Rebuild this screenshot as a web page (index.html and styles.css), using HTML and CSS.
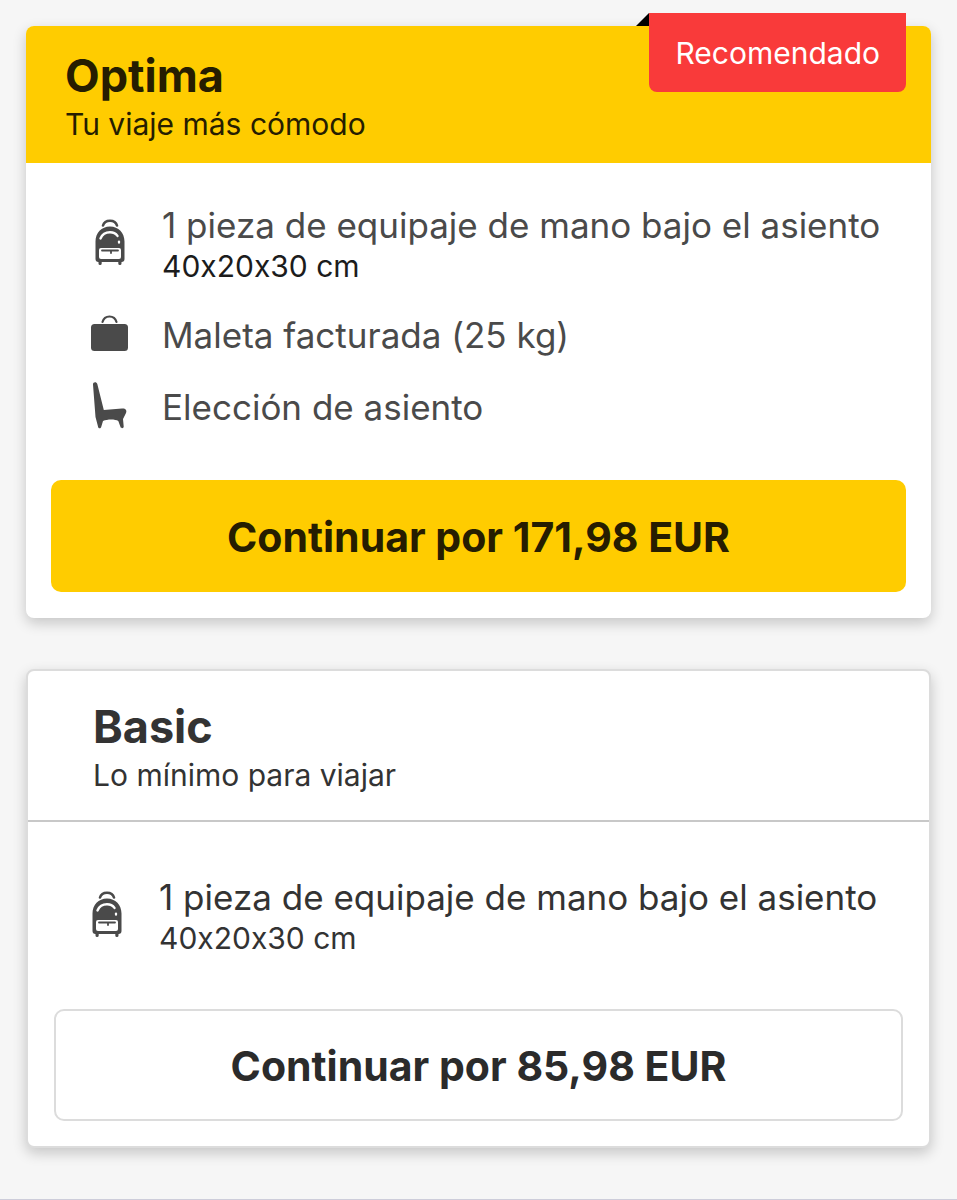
FILE: index.html
```html
<!DOCTYPE html>
<html lang="es">
  <head>
    <meta charset="UTF-8" />
    <meta name="viewport" content="width=device-width, initial-scale=1.0" />
    <title>Elige tu tarifa</title>
    <link rel="stylesheet" href="styles.css">
  </head>
  <body>
    <!-- Shared icons -->
    <svg class="icon-defs" width="0" height="0" aria-hidden="true">
      <symbol id="icon-backpack" viewBox="0 0 40 48">
        <path d="M13 7.500a7.200 6.200 0 0 1 14 0" fill="none" stroke="currentColor" stroke-width="2.600" stroke-linecap="round" />
        <path d="M20 8.500c8.500 0 14.500 6.500 14.500 15V41a3 3 0 0 1-3 3v1.500a1.500 1.500 0 0 1-3.200 0V44H11.700v1.500a1.500 1.500 0 0 1-3.200 0V44a3 3 0 0 1-3-3V23.500c0-8.500 6-15 14.500-15z" fill="currentColor" />
        <path d="M10.500 20.500c1.800-4.200 5-6.200 9.500-6.200 3.400 0 5.800 1.200 7.500 3.600" fill="none" stroke="#fff" stroke-width="2.400" stroke-linecap="round" />
        <path d="M29 23.500v1.200" stroke="#fff" stroke-width="2.200" stroke-linecap="round" />
        <rect x="9" y="30" width="22" height="11" rx="2" fill="#fff" />
        <path d="M12 32.500h16M21 32.500v2.500" stroke="currentColor" stroke-width="1.800" stroke-linecap="round" />
      </symbol>
      <symbol id="icon-suitcase" viewBox="0 0 40 48">
        <path d="M12.500 13c1-3.500 4-5.500 7-5.500s6 2 7 5.500" fill="none" stroke="currentColor" stroke-width="2.200" stroke-linecap="round" />
        <rect x="1" y="15" width="37" height="27" rx="3.500" fill="currentColor" />
      </symbol>
      <symbol id="icon-seat" viewBox="0 0 40 48">
        <path d="M3 3.500C2.800 1 6.500.500 7.300 3l6.500 26 18.200-1.500c3.500-.3 5.200 1.800 4 4.500l-3 6 .7 7.500c.1 2-2.700 2.300-3.200.5l-2.200-6c-3-2-11-2-15.300 0l-1.800 6c-.5 2-3.200 1.700-3.200-.5L5.500 36 3 3.500z" fill="currentColor" />
      </symbol>
    </svg>

    <main class="fares">
      <section class="card card-optima">
        <span class="badge">Recomendado</span>
        <header class="card-header">
          <h2>Optima</h2>
          <p>Tu viaje más cómodo</p>
        </header>
        <div class="card-body">
          <ul class="features">
            <li>
              <svg class="icon" aria-hidden="true"><use href="#icon-backpack" /></svg>
              <div>1 pieza de equipaje de mano bajo el asiento <small>40x20x30 cm</small></div>
            </li>
            <li>
              <svg class="icon" aria-hidden="true"><use href="#icon-suitcase" /></svg>
              <div>Maleta facturada (25 kg)</div>
            </li>
            <li>
              <svg class="icon" aria-hidden="true"><use href="#icon-seat" /></svg>
              <div>Elección de asiento</div>
            </li>
          </ul>
          <button type="button" class="btn">Continuar por 171,98 EUR</button>
        </div>
      </section>

      <section class="card card-basic">
        <header class="card-header">
          <h2>Basic</h2>
          <p>Lo mínimo para viajar</p>
        </header>
        <div class="card-body">
          <ul class="features">
            <li>
              <svg class="icon" aria-hidden="true"><use href="#icon-backpack" /></svg>
              <div>1 pieza de equipaje de mano bajo el asiento <small>40x20x30 cm</small></div>
            </li>
          </ul>
          <button type="button" class="btn">Continuar por 85,98 EUR</button>
        </div>
      </section>
    </main>
  </body>
</html>
```

FILE: styles.css
```css
* {
  box-sizing: border-box;
}

body {
  font-family: "Inter", "Liberation Sans", sans-serif;
  font-feature-settings: "calt" 0;
  background-color: #f6f6f6;
  color: #333;
  margin: 0;
  min-height: 100vh;
  border-bottom: 1px solid #cdcdda;
}

h2,
p,
ul {
  margin: 0;
  padding: 0;
}

.icon-defs {
  position: absolute;
}

.fares {
  display: flex;
  flex-direction: column;
  gap: 51px;
  padding: 26px;
}

.card {
  position: relative;
  background-color: #fff;
  border-radius: 8px;
  box-shadow: 0 5px 14px rgba(0, 0, 0, 0.2);
}

.card-header {
  padding: 23px 39px 17px;
}

.card-header h2 {
  font-size: 45px;
  line-height: 54px;
  font-weight: 700;
}

.card-header p {
  font-size: 30px;
  line-height: 43px;
}

.card-body {
  padding: 40px 25px 26px;
}

.features {
  list-style: none;
  display: flex;
  flex-direction: column;
  gap: 28px;
  padding: 0 20px 0 39px;
  margin-bottom: 51px;
}

.features li {
  display: flex;
  align-items: center;
  gap: 32px;
  font-size: 35px;
  line-height: 44px;
}

.features small {
  display: block;
  font-size: 30px;
  line-height: 38px;
}

.icon {
  flex: none;
  width: 40px;
  height: 48px;
  margin: -4px 0 0;
  color: #4a4a4a;
}

.btn {
  display: block;
  width: 100%;
  padding: 32px 20px 30px;
  border: none;
  border-radius: 10px;
  font-family: inherit;
  font-size: 41px;
  line-height: 50px;
  font-weight: 700;
  cursor: pointer;
}

/* Optima */
.card-optima .card-header {
  background-color: #ffcc00;
  border-radius: 8px 8px 0 0;
  color: #261d00;
}

.card-optima .features {
  color: #4a4a4a;
}

.card-optima .features small {
  color: #1c1c1c;
}

.card-optima .btn {
  background-color: #ffcc00;
  color: #261d00;
}

.badge {
  position: absolute;
  top: -13px;
  right: 25px;
  padding: 20px 26px 19px;
  background-color: #f93a3a;
  border-radius: 0 0 8px 8px;
  color: #fff;
  font-size: 30px;
  line-height: 40px;
}

/* folded corner of the ribbon */
.badge::before {
  content: "";
  position: absolute;
  top: 0;
  right: 100%;
  border-left: 13px solid transparent;
  border-bottom: 13px solid #000;
}

/* Basic */
.card-basic {
  border: 2px solid #dcdcdc;
}

.card-basic .card-header {
  padding: 29px 65px 23px;
  border-bottom: 2px solid #c8c8c8;
}

.card-basic .card-body {
  padding: 53px 26px 25px;
}

.card-basic .features {
  padding: 0 20px 0 33px;
  margin-bottom: 52px;
}

.card-basic .btn {
  background-color: #fff;
  border: 2px solid #dcdcdc;
  color: #2b2b2b;
  padding: 30px 20px 28px;
}
```
